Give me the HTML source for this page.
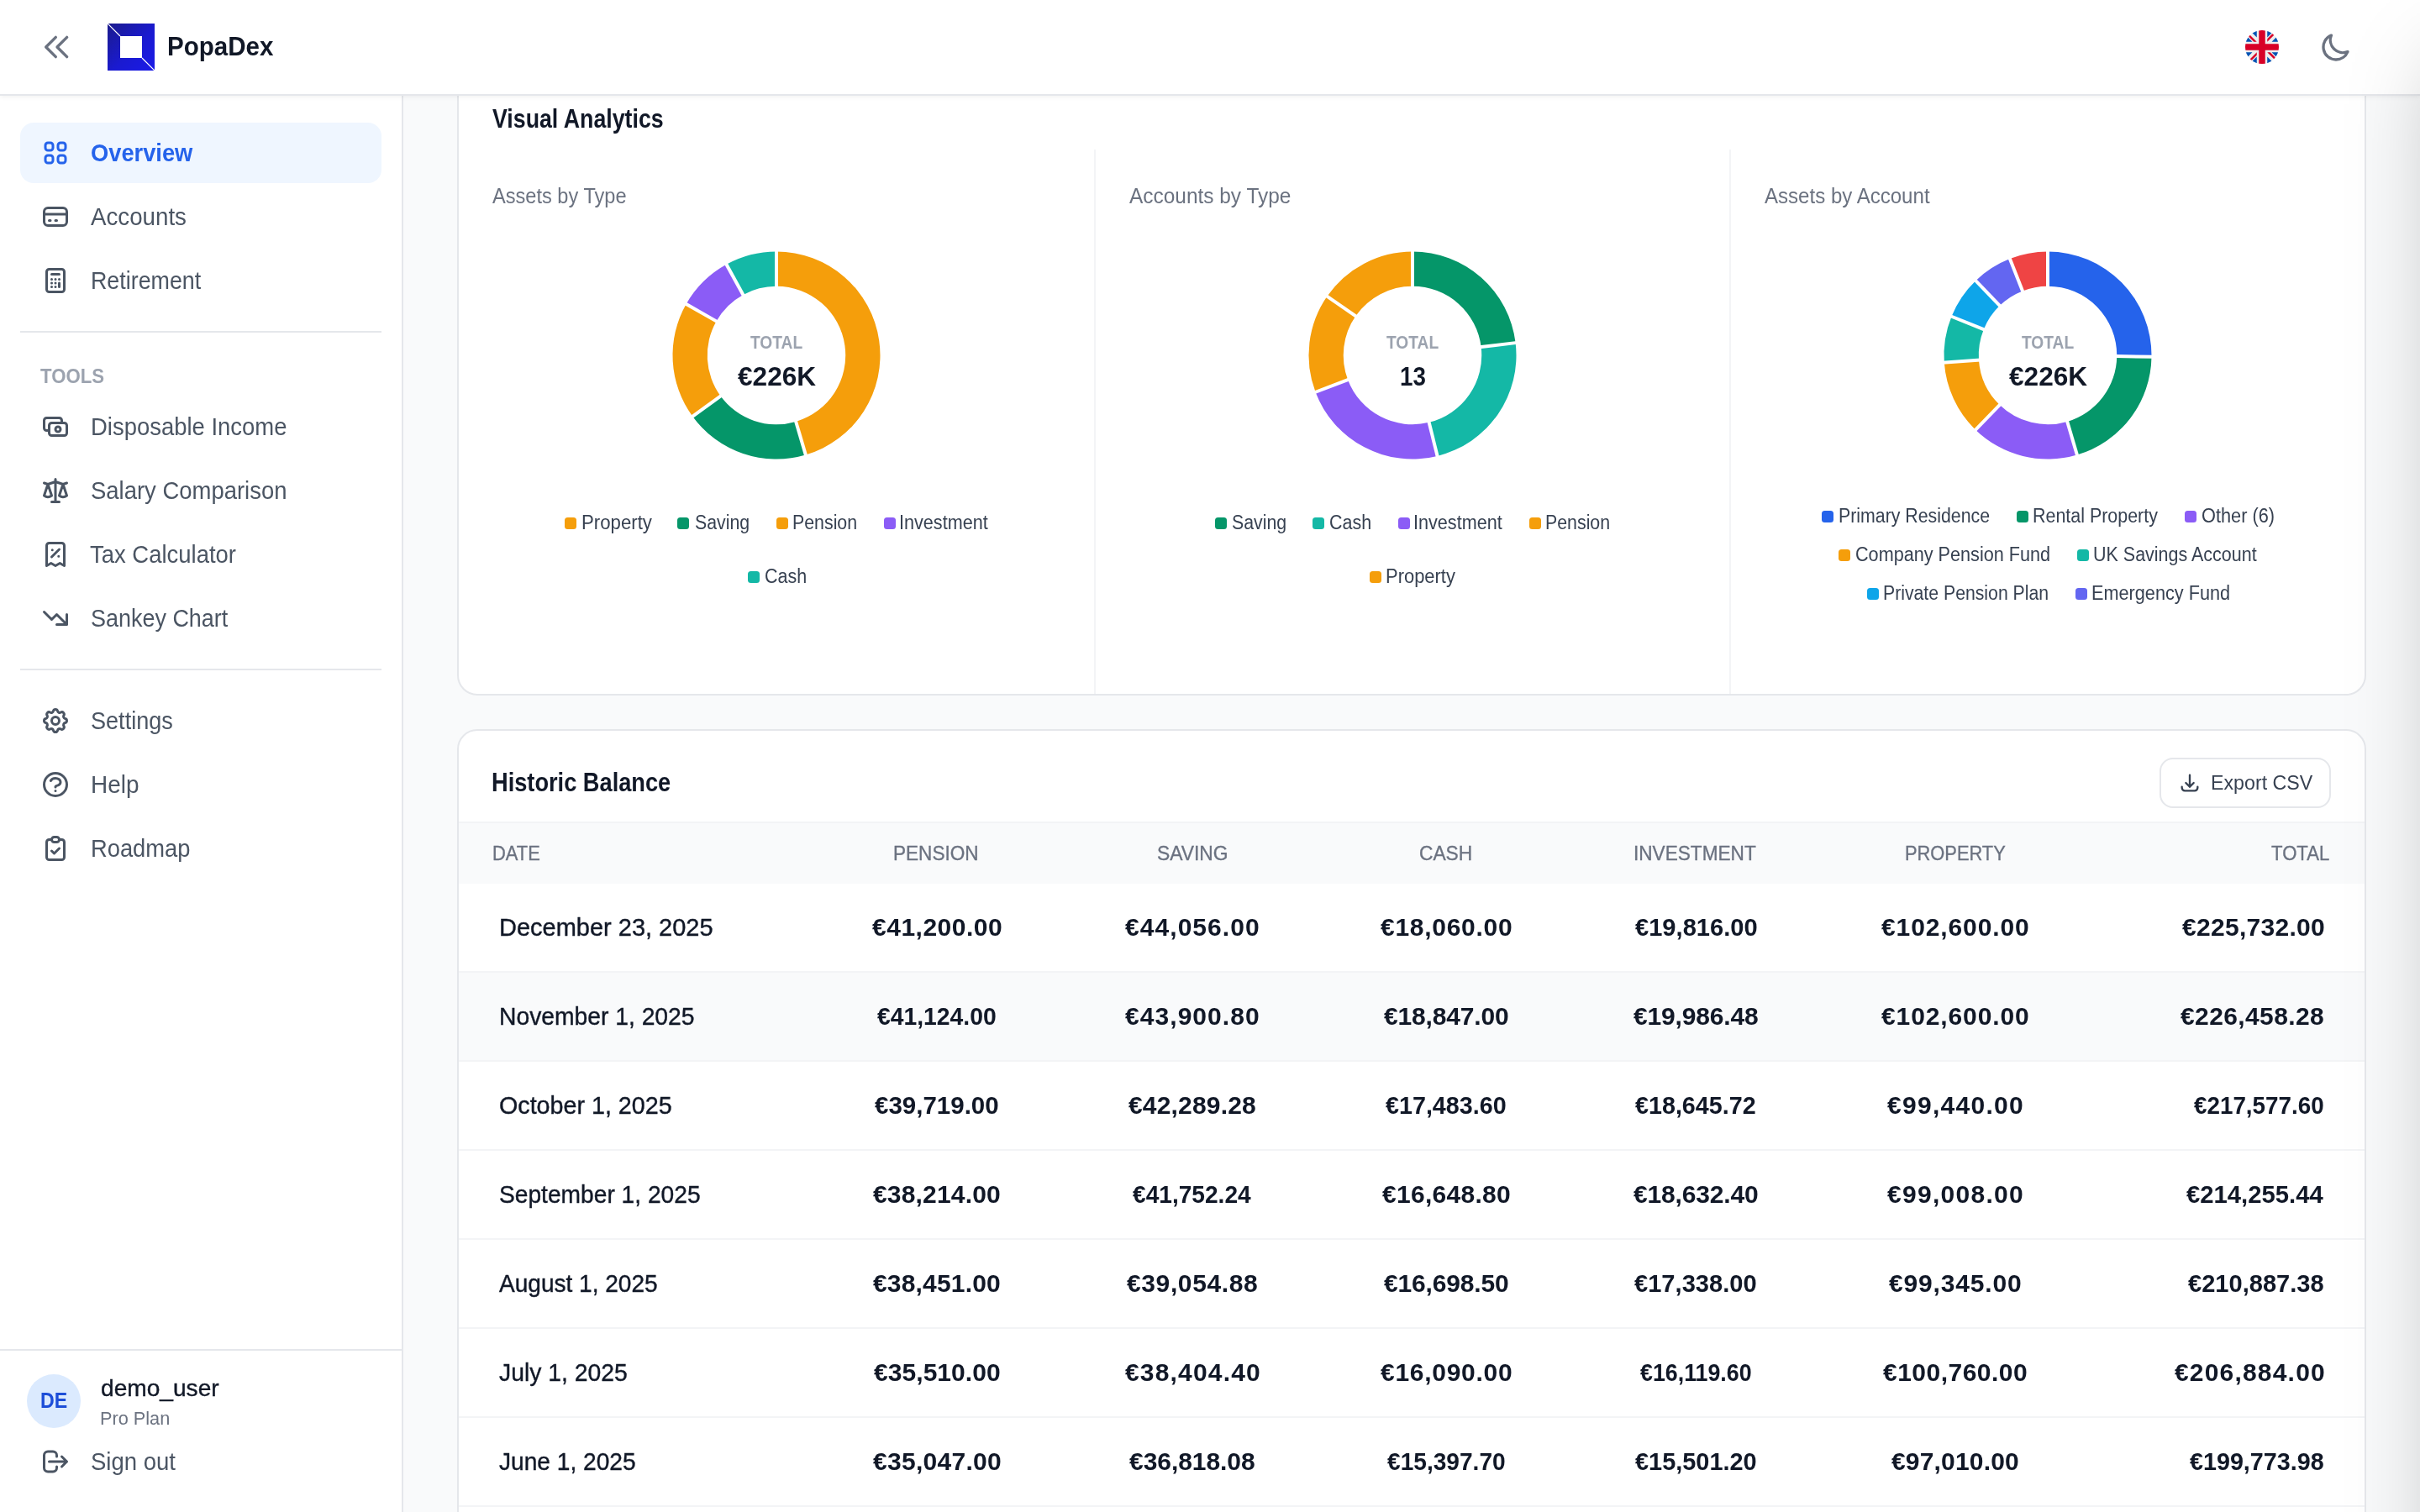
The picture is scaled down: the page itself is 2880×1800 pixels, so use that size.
<!DOCTYPE html>
<html lang="en"><head><meta charset="utf-8"><title>PopaDex</title>
<style>
html,body{margin:0;padding:0;width:2880px;height:1800px;overflow:hidden}
body{width:2880px;height:1800px;overflow:hidden;position:relative;background:#f9fafb;font-family:"Liberation Sans",sans-serif;}
.t{position:absolute;white-space:nowrap;line-height:1;margin:0}
.abs{position:absolute}
.card{position:absolute;background:#fff;border:2px solid #e5e7eb;border-radius:24px;box-sizing:border-box}
.sq{position:absolute;width:14px;height:14px;border-radius:3.5px}
#app{position:absolute;left:0;top:0;width:2880px;height:1800px;overflow:hidden;background:#f9fafb}
</style></head><body><div id="app">
<div class="card" style="left:544px;top:40px;width:2272px;height:788px"></div>
<div class="abs" style="left:1302px;top:178px;width:2px;height:648px;background:#f3f4f6"></div>
<div class="abs" style="left:2058px;top:178px;width:2px;height:648px;background:#f3f4f6"></div>
<div class="card" style="left:544px;top:868px;width:2272px;height:1100px;overflow:hidden">
<div class="abs" style="left:0;top:108px;width:2268px;height:2px;background:#f3f4f6"></div>
<div class="abs" style="left:0;top:110px;width:2268px;height:72px;background:#f9fafb"></div>
<div class="abs" style="left:0;top:288px;width:2268px;height:104px;background:#f9fafb"></div>
<div class="abs" style="left:0;top:286px;width:2268px;height:2px;background:#f3f4f6"></div>
<div class="abs" style="left:0;top:392px;width:2268px;height:2px;background:#f3f4f6"></div>
<div class="abs" style="left:0;top:498px;width:2268px;height:2px;background:#f3f4f6"></div>
<div class="abs" style="left:0;top:604px;width:2268px;height:2px;background:#f3f4f6"></div>
<div class="abs" style="left:0;top:710px;width:2268px;height:2px;background:#f3f4f6"></div>
<div class="abs" style="left:0;top:816px;width:2268px;height:2px;background:#f3f4f6"></div>
<div class="abs" style="left:0;top:922px;width:2268px;height:2px;background:#f3f4f6"></div>
<div class="abs" style="left:0;top:1028px;width:2268px;height:2px;background:#f3f4f6"></div>
</div>
<div class="abs" style="left:2570px;top:902px;width:204px;height:60px;box-sizing:border-box;border:2px solid #e5e7eb;border-radius:16px;background:#fff"></div>
<svg style="position:absolute;left:2592px;top:918px" width="28" height="28" viewBox="0 0 24 24" fill="none" stroke="#374151" stroke-width="2" stroke-linecap="round" stroke-linejoin="round"><path d="M4 16v1a3 3 0 003 3h10a3 3 0 003-3v-1m-4-4l-4 4m0 0l-4-4m4 4V4"/></svg>
<svg class="abs" style="left:0;top:0" width="2880" height="1800" viewBox="0 0 2880 1800">
<path d="M924.00 299.50A123.5 123.5 0 0 1 958.81 541.49L947.18 501.91A82.25 82.25 0 0 0 924.00 340.75Z" fill="#f59e0b"/>
<path d="M958.81 541.49A123.5 123.5 0 0 1 824.23 495.79L857.55 471.47A82.25 82.25 0 0 0 947.18 501.91Z" fill="#059669"/>
<path d="M824.23 495.79A123.5 123.5 0 0 1 816.61 362.01L852.48 382.38A82.25 82.25 0 0 0 857.55 471.47Z" fill="#f59e0b"/>
<path d="M816.61 362.01A123.5 123.5 0 0 1 864.50 314.78L884.37 350.93A82.25 82.25 0 0 0 852.48 382.38Z" fill="#8b5cf6"/>
<path d="M864.50 314.78A123.5 123.5 0 0 1 924.00 299.50L924.00 340.75A82.25 82.25 0 0 0 884.37 350.93Z" fill="#14b8a6"/>
<path d="M924.00 342.75L924.00 297.50" stroke="#fff" stroke-width="4"/>
<path d="M946.62 500.00L959.38 543.41" stroke="#fff" stroke-width="4"/>
<path d="M859.17 470.30L822.61 496.96" stroke="#fff" stroke-width="4"/>
<path d="M854.22 383.37L814.87 361.02" stroke="#fff" stroke-width="4"/>
<path d="M885.34 352.68L863.54 313.03" stroke="#fff" stroke-width="4"/>
<path d="M1681.00 299.50A123.5 123.5 0 0 1 1803.60 408.11L1762.65 413.09A82.25 82.25 0 0 0 1681.00 340.75Z" fill="#059669"/>
<path d="M1803.60 408.11A123.5 123.5 0 0 1 1710.56 542.91L1700.68 502.86A82.25 82.25 0 0 0 1762.65 413.09Z" fill="#14b8a6"/>
<path d="M1710.56 542.91A123.5 123.5 0 0 1 1565.53 466.79L1604.09 452.17A82.25 82.25 0 0 0 1700.68 502.86Z" fill="#8b5cf6"/>
<path d="M1565.53 466.79A123.5 123.5 0 0 1 1579.36 352.84L1613.31 376.28A82.25 82.25 0 0 0 1604.09 452.17Z" fill="#f59e0b"/>
<path d="M1579.36 352.84A123.5 123.5 0 0 1 1681.00 299.50L1681.00 340.75A82.25 82.25 0 0 0 1613.31 376.28Z" fill="#f59e0b"/>
<path d="M1681.00 342.75L1681.00 297.50" stroke="#fff" stroke-width="4"/>
<path d="M1760.66 413.33L1805.58 407.87" stroke="#fff" stroke-width="4"/>
<path d="M1700.21 500.92L1711.03 544.85" stroke="#fff" stroke-width="4"/>
<path d="M1605.96 451.46L1563.66 467.50" stroke="#fff" stroke-width="4"/>
<path d="M1614.96 377.41L1577.72 351.71" stroke="#fff" stroke-width="4"/>
<path d="M2437.00 299.50A123.5 123.5 0 0 1 2560.49 424.72L2519.24 424.15A82.25 82.25 0 0 0 2437.00 340.75Z" fill="#2563eb"/>
<path d="M2560.49 424.72A123.5 123.5 0 0 1 2471.87 541.48L2460.22 501.90A82.25 82.25 0 0 0 2519.24 424.15Z" fill="#059669"/>
<path d="M2471.87 541.48A123.5 123.5 0 0 1 2351.05 511.69L2379.76 482.07A82.25 82.25 0 0 0 2460.22 501.90Z" fill="#8b5cf6"/>
<path d="M2351.05 511.69A123.5 123.5 0 0 1 2313.80 431.61L2354.95 428.74A82.25 82.25 0 0 0 2379.76 482.07Z" fill="#f59e0b"/>
<path d="M2313.80 431.61A123.5 123.5 0 0 1 2322.49 376.74L2360.74 392.19A82.25 82.25 0 0 0 2354.95 428.74Z" fill="#14b8a6"/>
<path d="M2322.49 376.74A123.5 123.5 0 0 1 2351.21 334.16L2379.86 363.83A82.25 82.25 0 0 0 2360.74 392.19Z" fill="#0ea5e9"/>
<path d="M2351.21 334.16A123.5 123.5 0 0 1 2391.94 308.01L2406.99 346.42A82.25 82.25 0 0 0 2379.86 363.83Z" fill="#6366f1"/>
<path d="M2391.94 308.01A123.5 123.5 0 0 1 2437.00 299.50L2437.00 340.75A82.25 82.25 0 0 0 2406.99 346.42Z" fill="#ef4444"/>
<path d="M2437.00 342.75L2437.00 297.50" stroke="#fff" stroke-width="4"/>
<path d="M2517.24 424.12L2562.49 424.75" stroke="#fff" stroke-width="4"/>
<path d="M2459.66 499.98L2472.43 543.39" stroke="#fff" stroke-width="4"/>
<path d="M2381.15 480.63L2349.66 513.12" stroke="#fff" stroke-width="4"/>
<path d="M2356.95 428.60L2311.81 431.75" stroke="#fff" stroke-width="4"/>
<path d="M2362.59 392.94L2320.64 375.99" stroke="#fff" stroke-width="4"/>
<path d="M2381.25 365.27L2349.82 332.72" stroke="#fff" stroke-width="4"/>
<path d="M2407.72 348.28L2391.21 306.15" stroke="#fff" stroke-width="4"/>
</svg>
<div class="sq" style="left:672px;top:616px;background:#f59e0b"></div>
<div class="sq" style="left:806px;top:616px;background:#059669"></div>
<div class="sq" style="left:924px;top:616px;background:#f59e0b"></div>
<div class="sq" style="left:1052px;top:616px;background:#8b5cf6"></div>
<div class="sq" style="left:890px;top:680px;background:#14b8a6"></div>
<div class="sq" style="left:1446px;top:616px;background:#059669"></div>
<div class="sq" style="left:1562px;top:616px;background:#14b8a6"></div>
<div class="sq" style="left:1664px;top:616px;background:#8b5cf6"></div>
<div class="sq" style="left:1820px;top:616px;background:#f59e0b"></div>
<div class="sq" style="left:1630px;top:680px;background:#f59e0b"></div>
<div class="sq" style="left:2168px;top:608px;background:#2563eb"></div>
<div class="sq" style="left:2400px;top:608px;background:#059669"></div>
<div class="sq" style="left:2600px;top:608px;background:#8b5cf6"></div>
<div class="sq" style="left:2188px;top:654px;background:#f59e0b"></div>
<div class="sq" style="left:2472px;top:654px;background:#14b8a6"></div>
<div class="sq" style="left:2222px;top:700px;background:#0ea5e9"></div>
<div class="sq" style="left:2470px;top:700px;background:#6366f1"></div>
<div class="abs" style="left:0;top:112px;width:478px;height:1688px;background:#fff;border-right:2px solid #e5e7eb"></div>
<div class="abs" style="left:24px;top:146px;width:430px;height:72px;border-radius:16px;background:#eff6ff"></div>
<div class="abs" style="left:24px;top:394px;width:430px;height:2px;background:#e5e7eb"></div>
<div class="abs" style="left:24px;top:796px;width:430px;height:2px;background:#e5e7eb"></div>
<div class="abs" style="left:0;top:1606px;width:478px;height:2px;background:#e5e7eb"></div>
<div class="abs" style="left:32px;top:1636px;width:64px;height:64px;border-radius:50%;background:#dbeafe"></div>
<svg style="position:absolute;left:48px;top:164px" width="36" height="36" viewBox="0 0 24 24" fill="none" stroke="#2563eb" stroke-width="2" stroke-linecap="round" stroke-linejoin="round"><path d="M4 6a2 2 0 012-2h2a2 2 0 012 2v2a2 2 0 01-2 2H6a2 2 0 01-2-2V6zM14 6a2 2 0 012-2h2a2 2 0 012 2v2a2 2 0 01-2 2h-2a2 2 0 01-2-2V6zM4 16a2 2 0 012-2h2a2 2 0 012 2v2a2 2 0 01-2 2H6a2 2 0 01-2-2v-2zM14 16a2 2 0 012-2h2a2 2 0 012 2v2a2 2 0 01-2 2h-2a2 2 0 01-2-2v-2z"/></svg>
<svg style="position:absolute;left:48px;top:240px" width="36" height="36" viewBox="0 0 24 24" fill="none" stroke="#4b5563" stroke-width="2" stroke-linecap="round" stroke-linejoin="round"><path d="M3 10h18M7 15h1m4 0h1m-7 4h12a3 3 0 003-3V8a3 3 0 00-3-3H6a3 3 0 00-3 3v8a3 3 0 003 3z"/></svg>
<svg style="position:absolute;left:48px;top:316px" width="36" height="36" viewBox="0 0 24 24" fill="none" stroke="#4b5563" stroke-width="2" stroke-linecap="round" stroke-linejoin="round"><path d="M9 7h6m0 10v-3m-3 3h.01M9 17h.01M9 14h.01M12 14h.01M15 11h.01M12 11h.01M9 11h.01M7 21h10a2 2 0 002-2V5a2 2 0 00-2-2H7a2 2 0 00-2 2v14a2 2 0 002 2z"/></svg>
<svg style="position:absolute;left:48px;top:490px" width="36" height="36" viewBox="0 0 24 24" fill="none" stroke="#4b5563" stroke-width="2" stroke-linecap="round" stroke-linejoin="round"><path d="M17 9V7a2 2 0 00-2-2H5a2 2 0 00-2 2v6a2 2 0 002 2h2m2 4h10a2 2 0 002-2v-6a2 2 0 00-2-2H9a2 2 0 00-2 2v6a2 2 0 002 2zm7-5a2 2 0 11-4 0 2 2 0 014 0z"/></svg>
<svg style="position:absolute;left:48px;top:566px" width="36" height="36" viewBox="0 0 24 24" fill="none" stroke="#4b5563" stroke-width="2" stroke-linecap="round" stroke-linejoin="round"><path d="M3 6l3 1m0 0l-3 9a5.002 5.002 0 006.001 0M6 7l3 9M6 7l6-2m6 2l3-1m-3 1l-3 9a5.002 5.002 0 006.001 0M18 7l3 9m-3-9l-6-2m0-2v2m0 16V5m0 16H9m3 0h3"/></svg>
<svg style="position:absolute;left:48px;top:642px" width="36" height="36" viewBox="0 0 24 24" fill="none" stroke="#4b5563" stroke-width="2" stroke-linecap="round" stroke-linejoin="round"><path d="M9 14l6-6m-5.5.5h.01m4.99 5h.01M19 21V5a2 2 0 00-2-2H7a2 2 0 00-2 2v16l3.5-2 3.5 2 3.5-2 3.5 2z"/></svg>
<svg style="position:absolute;left:48px;top:718px" width="36" height="36" viewBox="0 0 24 24" fill="none" stroke="#4b5563" stroke-width="2" stroke-linecap="round" stroke-linejoin="round"><path d="M13 17h8m0 0V9m0 8l-8-8-4 4-6-6"/></svg>
<svg style="position:absolute;left:48px;top:840px" width="36" height="36" viewBox="0 0 24 24" fill="none" stroke="#4b5563" stroke-width="2" stroke-linecap="round" stroke-linejoin="round"><path d="M10.325 4.317c.426-1.756 2.924-1.756 3.35 0a1.724 1.724 0 002.573 1.066c1.543-.94 3.31.826 2.37 2.37a1.724 1.724 0 001.065 2.572c1.756.426 1.756 2.924 0 3.35a1.724 1.724 0 00-1.066 2.573c.94 1.543-.826 3.31-2.37 2.37a1.724 1.724 0 00-2.572 1.065c-.426 1.756-2.924 1.756-3.35 0a1.724 1.724 0 00-2.573-1.066c-1.543.94-3.31-.826-2.37-2.37a1.724 1.724 0 00-1.065-2.572c-1.756-.426-1.756-2.924 0-3.35a1.724 1.724 0 001.066-2.573c-.94-1.543.826-3.31 2.37-2.37.996.608 2.296.07 2.572-1.065zM15 12a3 3 0 11-6 0 3 3 0 016 0z"/></svg>
<svg style="position:absolute;left:48px;top:916px" width="36" height="36" viewBox="0 0 24 24" fill="none" stroke="#4b5563" stroke-width="2" stroke-linecap="round" stroke-linejoin="round"><path d="M8.228 9c.549-1.165 2.03-2 3.772-2 2.21 0 4 1.343 4 3 0 1.4-1.278 2.575-3.006 2.907-.542.104-.994.54-.994 1.093m0 3h.01M21 12a9 9 0 11-18 0 9 9 0 0118 0z"/></svg>
<svg style="position:absolute;left:48px;top:992px" width="36" height="36" viewBox="0 0 24 24" fill="none" stroke="#4b5563" stroke-width="2" stroke-linecap="round" stroke-linejoin="round"><path d="M9 5H7a2 2 0 00-2 2v12a2 2 0 002 2h10a2 2 0 002-2V7a2 2 0 00-2-2h-2M9 5a2 2 0 002 2h2a2 2 0 002-2M9 5a2 2 0 012-2h2a2 2 0 012 2m-6 9l2 2 4-4"/></svg>
<svg style="position:absolute;left:48px;top:1722px" width="36" height="36" viewBox="0 0 24 24" fill="none" stroke="#4b5563" stroke-width="2" stroke-linecap="round" stroke-linejoin="round"><path d="M17 16l4-4m0 0l-4-4m4 4H7m6 4v1a3 3 0 01-3 3H6a3 3 0 01-3-3V7a3 3 0 013-3h4a3 3 0 013 3v1"/></svg>
<div class="abs" style="left:0;top:0;width:2880px;height:112px;background:#fff;border-bottom:2px solid #e5e7eb;box-shadow:0 2px 5px rgba(0,0,0,.05)"></div>
<svg style="position:absolute;left:48px;top:36px" width="40" height="40" viewBox="0 0 24 24" fill="none" stroke="#6b7280" stroke-width="2" stroke-linecap="round" stroke-linejoin="round"><path d="M11 19l-7-7 7-7m8 14l-7-7 7-7"/></svg>
<svg class="abs" style="left:128px;top:28px" width="56" height="56" viewBox="0 0 56 56"><defs><linearGradient id="lg" x1="0" y1="0" x2="1" y2="1"><stop offset="0" stop-color="#1b1b8c"/><stop offset=".55" stop-color="#1a1ad0"/><stop offset="1" stop-color="#1a1ae8"/></linearGradient></defs><rect width="56" height="56" fill="url(#lg)"/><rect x="15" y="15" width="26" height="26" fill="#fff"/><path d="M0 0L15 15M41 41L56 56" stroke="#fff" stroke-width="1.2"/></svg>
<svg class="abs" style="left:2672px;top:36px" width="40" height="40" viewBox="0 0 512 512"><defs><clipPath id="fc"><circle cx="256" cy="256" r="256"/></clipPath></defs><g clip-path="url(#fc)">
<rect width="512" height="512" fill="#eee"/>
<path fill="#0052b4" d="M336 0v108L444 0Zm176 68L404 176h108zM0 176h108L0 68ZM68 0l108 108V0Zm108 512V404L68 512ZM0 444l108-108H0Zm512-108H404l108 108Zm-68 176L336 404v108z"/>
<path fill="#d80027" d="M0 0v45l131 131h45L0 0zm208 0v208H0v96h208v208h96V304h208v-96H304V0h-96zm259 0L336 131v45L512 0h-45zM176 336 0 512h45l131-131v-45zm160 0 176 176v-45L381 336h-45z"/>
</g></svg>
<svg style="position:absolute;left:2760px;top:36px" width="40" height="40" viewBox="0 0 24 24" fill="none" stroke="#6b7280" stroke-width="2" stroke-linecap="round" stroke-linejoin="round"><path d="M20.354 15.354A9 9 0 018.646 3.646 9.003 9.003 0 0012 21a9.003 9.003 0 008.354-5.646z"/></svg>
<div class="abs" style="left:0;top:0;width:2880px;height:1800px;will-change:transform">
<div class="t" style="left:199.15px;top:40px;font-size:31.5px;font-weight:700;color:#111827;transform-origin:0 0;transform:scaleX(0.9380)">PopaDex</div>
<div class="t" style="left:108.09px;top:167px;font-size:30.0px;font-weight:700;color:#2563eb;transform-origin:0 0;transform:scaleX(0.9092)">Overview</div>
<div class="t" style="left:108.00px;top:243px;font-size:30.0px;font-weight:400;color:#4b5563;transform-origin:0 0;transform:scaleX(0.9232)">Accounts</div>
<div class="t" style="left:108.22px;top:319px;font-size:30.0px;font-weight:400;color:#4b5563;transform-origin:0 0;transform:scaleX(0.8942)">Retirement</div>
<div class="t" style="left:48.00px;top:436px;font-size:24.0px;font-weight:700;color:#9ca3af;transform-origin:0 0;transform:scaleX(0.9245)">TOOLS</div>
<div class="t" style="left:108.17px;top:493px;font-size:30.0px;font-weight:400;color:#4b5563;transform-origin:0 0;transform:scaleX(0.9151)">Disposable Income</div>
<div class="t" style="left:108.09px;top:569px;font-size:30.0px;font-weight:400;color:#4b5563;transform-origin:0 0;transform:scaleX(0.9152)">Salary Comparison</div>
<div class="t" style="left:107.00px;top:645px;font-size:30.0px;font-weight:400;color:#4b5563;transform-origin:0 0;transform:scaleX(0.9154)">Tax Calculator</div>
<div class="t" style="left:108.11px;top:721px;font-size:30.0px;font-weight:400;color:#4b5563;transform-origin:0 0;transform:scaleX(0.8985)">Sankey Chart</div>
<div class="t" style="left:108.10px;top:843px;font-size:30.0px;font-weight:400;color:#4b5563;transform-origin:0 0;transform:scaleX(0.9023)">Settings</div>
<div class="t" style="left:108.15px;top:919px;font-size:30.0px;font-weight:400;color:#4b5563;transform-origin:0 0;transform:scaleX(0.9321)">Help</div>
<div class="t" style="left:108.19px;top:995px;font-size:30.0px;font-weight:400;color:#4b5563;transform-origin:0 0;transform:scaleX(0.9106)">Roadmap</div>
<div class="t" style="left:48.13px;top:1655px;font-size:25.5px;font-weight:700;color:#1d4ed8;transform-origin:0 0;transform:scaleX(0.9082)">DE</div>
<div class="t" style="left:119.62px;top:1638px;font-size:28.5px;font-weight:400;-webkit-text-stroke:0.4px;color:#111827;transform-origin:0 0;transform:scaleX(0.9867)">demo_user</div>
<div class="t" style="left:119.03px;top:1678px;font-size:22.0px;font-weight:400;color:#6b7280;transform-origin:0 0;transform:scaleX(0.9865)">Pro Plan</div>
<div class="t" style="left:108.07px;top:1725px;font-size:29.5px;font-weight:400;color:#4b5563;transform-origin:0 0;transform:scaleX(0.9323)">Sign out</div>
<div class="t" style="left:585.80px;top:126px;font-size:30.5px;font-weight:700;color:#111827;transform-origin:0 0;transform:scaleX(0.8769)">Visual Analytics</div>
<div class="t" style="left:586.40px;top:221px;font-size:25.5px;font-weight:400;color:#6b7280;transform-origin:0 0;transform:scaleX(0.9252)">Assets by Type</div>
<div class="t" style="left:1344.20px;top:221px;font-size:25.5px;font-weight:400;color:#6b7280;transform-origin:0 0;transform:scaleX(0.9578)">Accounts by Type</div>
<div class="t" style="left:2100.00px;top:221px;font-size:25.5px;font-weight:400;color:#6b7280;transform-origin:0 0;transform:scaleX(0.9434)">Assets by Account</div>
<div class="t" style="left:893.40px;top:398px;font-size:21.5px;font-weight:700;color:#9ca3af;transform-origin:0 0;transform:scaleX(0.8922)">TOTAL</div>
<div class="t" style="left:1650.40px;top:398px;font-size:21.5px;font-weight:700;color:#9ca3af;transform-origin:0 0;transform:scaleX(0.8922)">TOTAL</div>
<div class="t" style="left:2406.40px;top:398px;font-size:21.5px;font-weight:700;color:#9ca3af;transform-origin:0 0;transform:scaleX(0.8922)">TOTAL</div>
<div class="t" style="left:878.00px;top:432px;font-size:32.0px;font-weight:700;color:#111827;transform-origin:0 0;transform:scaleX(0.9874)">€226K</div>
<div class="t" style="left:1665.72px;top:432px;font-size:32.0px;font-weight:700;color:#111827;transform-origin:0 0;transform:scaleX(0.8668)">13</div>
<div class="t" style="left:2391.00px;top:432px;font-size:32.0px;font-weight:700;color:#111827;transform-origin:0 0;transform:scaleX(0.9874)">€226K</div>
<div class="t" style="left:692.26px;top:611px;font-size:23.0px;font-weight:400;color:#374151;transform-origin:0 0;transform:scaleX(0.9655)">Property</div>
<div class="t" style="left:827.28px;top:611px;font-size:23.0px;font-weight:400;color:#374151;transform-origin:0 0;transform:scaleX(0.9253)">Saving</div>
<div class="t" style="left:943.29px;top:611px;font-size:23.0px;font-weight:400;color:#374151;transform-origin:0 0;transform:scaleX(0.9277)">Pension</div>
<div class="t" style="left:1070.34px;top:611px;font-size:23.0px;font-weight:400;color:#374151;transform-origin:0 0;transform:scaleX(0.9398)">Investment</div>
<div class="t" style="left:910.28px;top:675px;font-size:23.0px;font-weight:400;color:#374151;transform-origin:0 0;transform:scaleX(0.9329)">Cash</div>
<div class="t" style="left:1466.28px;top:611px;font-size:23.0px;font-weight:400;color:#374151;transform-origin:0 0;transform:scaleX(0.9253)">Saving</div>
<div class="t" style="left:1582.27px;top:611px;font-size:23.0px;font-weight:400;color:#374151;transform-origin:0 0;transform:scaleX(0.9326)">Cash</div>
<div class="t" style="left:1682.34px;top:611px;font-size:23.0px;font-weight:400;color:#374151;transform-origin:0 0;transform:scaleX(0.9397)">Investment</div>
<div class="t" style="left:1839.29px;top:611px;font-size:23.0px;font-weight:400;color:#374151;transform-origin:0 0;transform:scaleX(0.9277)">Pension</div>
<div class="t" style="left:1649.26px;top:675px;font-size:23.0px;font-weight:400;color:#374151;transform-origin:0 0;transform:scaleX(0.9539)">Property</div>
<div class="t" style="left:2188.28px;top:603px;font-size:23.0px;font-weight:400;color:#374151;transform-origin:0 0;transform:scaleX(0.9268)">Primary Residence</div>
<div class="t" style="left:2419.28px;top:603px;font-size:23.0px;font-weight:400;color:#374151;transform-origin:0 0;transform:scaleX(0.9317)">Rental Property</div>
<div class="t" style="left:2620.26px;top:603px;font-size:23.0px;font-weight:400;color:#374151;transform-origin:0 0;transform:scaleX(0.9452)">Other (6)</div>
<div class="t" style="left:2208.26px;top:649px;font-size:23.0px;font-weight:400;color:#374151;transform-origin:0 0;transform:scaleX(0.9406)">Company Pension Fund</div>
<div class="t" style="left:2491.28px;top:649px;font-size:23.0px;font-weight:400;color:#374151;transform-origin:0 0;transform:scaleX(0.9339)">UK Savings Account</div>
<div class="t" style="left:2241.28px;top:695px;font-size:23.0px;font-weight:400;color:#374151;transform-origin:0 0;transform:scaleX(0.9230)">Private Pension Plan</div>
<div class="t" style="left:2489.27px;top:695px;font-size:23.0px;font-weight:400;color:#374151;transform-origin:0 0;transform:scaleX(0.9427)">Emergency Fund</div>
<div class="t" style="left:584.62px;top:916px;font-size:30.5px;font-weight:700;color:#111827;transform-origin:0 0;transform:scaleX(0.8922)">Historic Balance</div>
<div class="t" style="left:2631.13px;top:920px;font-size:24.5px;font-weight:400;color:#374151;transform-origin:0 0;transform:scaleX(0.9476)">Export CSV</div>
<div class="t" style="left:586.09px;top:1004px;font-size:24.0px;font-weight:400;-webkit-text-stroke:0.35px;color:#6b7280;transform-origin:0 0;transform:scaleX(0.9133)">DATE</div>
<div class="t" style="left:1063.07px;top:1004px;font-size:24.0px;font-weight:400;-webkit-text-stroke:0.35px;color:#6b7280;transform-origin:0 0;transform:scaleX(0.9406)">PENSION</div>
<div class="t" style="left:1377.04px;top:1004px;font-size:24.0px;font-weight:400;-webkit-text-stroke:0.35px;color:#6b7280;transform-origin:0 0;transform:scaleX(0.9509)">SAVING</div>
<div class="t" style="left:1689.06px;top:1004px;font-size:24.0px;font-weight:400;-webkit-text-stroke:0.35px;color:#6b7280;transform-origin:0 0;transform:scaleX(0.9481)">CASH</div>
<div class="t" style="left:1944.13px;top:1004px;font-size:24.0px;font-weight:400;-webkit-text-stroke:0.35px;color:#6b7280;transform-origin:0 0;transform:scaleX(0.9424)">INVESTMENT</div>
<div class="t" style="left:2267.29px;top:1004px;font-size:24.0px;font-weight:400;-webkit-text-stroke:0.35px;color:#6b7280;transform-origin:0 0;transform:scaleX(0.9098)">PROPERTY</div>
<div class="t" style="left:2703.00px;top:1004px;font-size:24.0px;font-weight:400;-webkit-text-stroke:0.35px;color:#6b7280;transform-origin:0 0;transform:scaleX(0.9227)">TOTAL</div>
<div class="t" style="left:594.07px;top:1089px;font-size:30.0px;font-weight:400;-webkit-text-stroke:0.4px;color:#111827;transform-origin:0 0;transform:scaleX(0.9662)">December 23, 2025</div>
<div class="t" style="left:1038.00px;top:1089px;font-size:30.0px;font-weight:700;color:#111827;letter-spacing:0.504px">€41,200.00</div>
<div class="t" style="left:1339.00px;top:1089px;font-size:30.0px;font-weight:700;color:#111827;letter-spacing:1.060px">€44,056.00</div>
<div class="t" style="left:1643.00px;top:1089px;font-size:30.0px;font-weight:700;color:#111827;letter-spacing:0.726px">€18,060.00</div>
<div class="t" style="left:1946.00px;top:1089px;font-size:30.0px;font-weight:700;color:#111827;transform-origin:0 0;transform:scaleX(0.9702)">€19,816.00</div>
<div class="t" style="left:2239.00px;top:1089px;font-size:30.0px;font-weight:700;color:#111827;letter-spacing:0.885px">€102,600.00</div>
<div class="t" style="left:2597.00px;top:1089px;font-size:30.0px;font-weight:700;color:#111827;letter-spacing:0.285px">€225,732.00</div>
<div class="t" style="left:594.12px;top:1195px;font-size:30.0px;font-weight:400;-webkit-text-stroke:0.4px;color:#111827;transform-origin:0 0;transform:scaleX(0.9421)">November 1, 2025</div>
<div class="t" style="left:1044.00px;top:1195px;font-size:30.0px;font-weight:700;color:#111827;transform-origin:0 0;transform:scaleX(0.9435)">€41,124.00</div>
<div class="t" style="left:1339.00px;top:1195px;font-size:30.0px;font-weight:700;color:#111827;letter-spacing:1.060px">€43,900.80</div>
<div class="t" style="left:1647.00px;top:1195px;font-size:30.0px;font-weight:700;color:#111827;letter-spacing:-0.162px">€18,847.00</div>
<div class="t" style="left:1944.00px;top:1195px;font-size:30.0px;font-weight:700;color:#111827;letter-spacing:-0.162px">€19,986.48</div>
<div class="t" style="left:2239.00px;top:1195px;font-size:30.0px;font-weight:700;color:#111827;letter-spacing:0.885px">€102,600.00</div>
<div class="t" style="left:2595.00px;top:1195px;font-size:30.0px;font-weight:700;color:#111827;letter-spacing:0.385px">€226,458.28</div>
<div class="t" style="left:594.05px;top:1301px;font-size:30.0px;font-weight:400;-webkit-text-stroke:0.4px;color:#111827;transform-origin:0 0;transform:scaleX(0.9557)">October 1, 2025</div>
<div class="t" style="left:1041.00px;top:1301px;font-size:30.0px;font-weight:700;color:#111827;transform-origin:0 0;transform:scaleX(0.9836)">€39,719.00</div>
<div class="t" style="left:1343.00px;top:1301px;font-size:30.0px;font-weight:700;color:#111827;letter-spacing:0.171px">€42,289.28</div>
<div class="t" style="left:1649.00px;top:1301px;font-size:30.0px;font-weight:700;color:#111827;transform-origin:0 0;transform:scaleX(0.9568)">€17,483.60</div>
<div class="t" style="left:1946.00px;top:1301px;font-size:30.0px;font-weight:700;color:#111827;transform-origin:0 0;transform:scaleX(0.9568)">€18,645.72</div>
<div class="t" style="left:2246.00px;top:1301px;font-size:30.0px;font-weight:700;color:#111827;letter-spacing:1.282px">€99,440.00</div>
<div class="t" style="left:2611.00px;top:1301px;font-size:30.0px;font-weight:700;color:#111827;transform-origin:0 0;transform:scaleX(0.9269)">€217,577.60</div>
<div class="t" style="left:594.06px;top:1407px;font-size:30.0px;font-weight:400;-webkit-text-stroke:0.4px;color:#111827;transform-origin:0 0;transform:scaleX(0.9389)">September 1, 2025</div>
<div class="t" style="left:1039.00px;top:1407px;font-size:30.0px;font-weight:700;color:#111827;letter-spacing:0.171px">€38,214.00</div>
<div class="t" style="left:1348.00px;top:1407px;font-size:30.0px;font-weight:700;color:#111827;transform-origin:0 0;transform:scaleX(0.9371)">€41,752.24</div>
<div class="t" style="left:1645.00px;top:1407px;font-size:30.0px;font-weight:700;color:#111827;letter-spacing:0.282px">€16,648.80</div>
<div class="t" style="left:1944.00px;top:1407px;font-size:30.0px;font-weight:700;color:#111827;letter-spacing:-0.162px">€18,632.40</div>
<div class="t" style="left:2246.00px;top:1407px;font-size:30.0px;font-weight:700;color:#111827;letter-spacing:1.282px">€99,008.00</div>
<div class="t" style="left:2602.00px;top:1407px;font-size:30.0px;font-weight:700;color:#111827;transform-origin:0 0;transform:scaleX(0.9752)">€214,255.44</div>
<div class="t" style="left:594.00px;top:1513px;font-size:30.0px;font-weight:400;-webkit-text-stroke:0.4px;color:#111827;transform-origin:0 0;transform:scaleX(0.9347)">August 1, 2025</div>
<div class="t" style="left:1039.00px;top:1513px;font-size:30.0px;font-weight:700;color:#111827;letter-spacing:0.171px">€38,451.00</div>
<div class="t" style="left:1341.00px;top:1513px;font-size:30.0px;font-weight:700;color:#111827;letter-spacing:0.615px">€39,054.88</div>
<div class="t" style="left:1647.00px;top:1513px;font-size:30.0px;font-weight:700;color:#111827;letter-spacing:-0.162px">€16,698.50</div>
<div class="t" style="left:1945.00px;top:1513px;font-size:30.0px;font-weight:700;color:#111827;transform-origin:0 0;transform:scaleX(0.9702)">€17,338.00</div>
<div class="t" style="left:2248.00px;top:1513px;font-size:30.0px;font-weight:700;color:#111827;letter-spacing:0.838px">€99,345.00</div>
<div class="t" style="left:2604.00px;top:1513px;font-size:30.0px;font-weight:700;color:#111827;transform-origin:0 0;transform:scaleX(0.9690)">€210,887.38</div>
<div class="t" style="left:594.00px;top:1619px;font-size:30.0px;font-weight:400;-webkit-text-stroke:0.4px;color:#111827;transform-origin:0 0;transform:scaleX(0.9436)">July 1, 2025</div>
<div class="t" style="left:1040.00px;top:1619px;font-size:30.0px;font-weight:700;color:#111827;letter-spacing:0.060px">€35,510.00</div>
<div class="t" style="left:1339.00px;top:1619px;font-size:30.0px;font-weight:700;color:#111827;letter-spacing:1.171px">€38,404.40</div>
<div class="t" style="left:1643.00px;top:1619px;font-size:30.0px;font-weight:700;color:#111827;letter-spacing:0.726px">€16,090.00</div>
<div class="t" style="left:1952.00px;top:1619px;font-size:30.0px;font-weight:700;color:#111827;transform-origin:0 0;transform:scaleX(0.8931)">€16,119.60</div>
<div class="t" style="left:2241.00px;top:1619px;font-size:30.0px;font-weight:700;color:#111827;letter-spacing:0.485px">€100,760.00</div>
<div class="t" style="left:2588.00px;top:1619px;font-size:30.0px;font-weight:700;color:#111827;letter-spacing:1.185px">€206,884.00</div>
<div class="t" style="left:594.00px;top:1725px;font-size:30.0px;font-weight:400;-webkit-text-stroke:0.4px;color:#111827;transform-origin:0 0;transform:scaleX(0.9375)">June 1, 2025</div>
<div class="t" style="left:1039.00px;top:1725px;font-size:30.0px;font-weight:700;color:#111827;letter-spacing:0.282px">€35,047.00</div>
<div class="t" style="left:1344.00px;top:1725px;font-size:30.0px;font-weight:700;color:#111827;letter-spacing:-0.051px">€36,818.08</div>
<div class="t" style="left:1651.00px;top:1725px;font-size:30.0px;font-weight:700;color:#111827;transform-origin:0 0;transform:scaleX(0.9367)">€15,397.70</div>
<div class="t" style="left:1946.00px;top:1725px;font-size:30.0px;font-weight:700;color:#111827;transform-origin:0 0;transform:scaleX(0.9635)">€15,501.20</div>
<div class="t" style="left:2251.00px;top:1725px;font-size:30.0px;font-weight:700;color:#111827;letter-spacing:0.171px">€97,010.00</div>
<div class="t" style="left:2606.00px;top:1725px;font-size:30.0px;font-weight:700;color:#111827;transform-origin:0 0;transform:scaleX(0.9570)">€199,773.98</div>
</div>
<div class="abs" style="left:2880px;top:0;width:800px;height:2100px;box-shadow:0 50px 100px -24px rgba(0,0,0,.25)"></div>
</div></body></html>
